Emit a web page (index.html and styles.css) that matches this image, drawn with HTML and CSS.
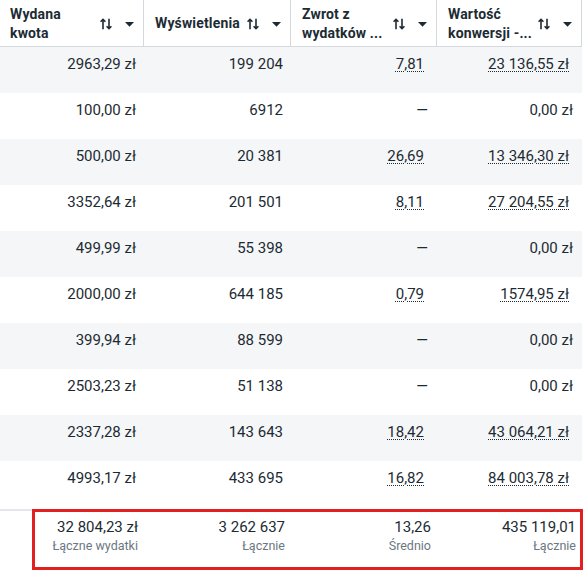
FILE: index.html
```html
<!DOCTYPE html>
<html lang="pl">
<head>
<meta charset="utf-8">
<link rel="stylesheet" href="styles.css">
</head>
<body>
<div class="table">
  <div class="head">
    <div class="hcell"><span class="label">Wydana kwota</span><span class="icons"><svg class="sort" width="12" height="12" viewBox="0 0 12 12"><path d="M3 11.2V1.2M0.6 3.8L3 1.3L5.4 3.8M9 0.8v10M6.6 8.2L9 10.7L11.4 8.2" fill="none" stroke="#1c2b33" stroke-width="1.6"/></svg><svg class="caret" width="9" height="5" viewBox="0 0 9 5"><path d="M0 0H9L4.5 4.8Z" fill="#1c2b33"/></svg></span></div>
    <div class="hcell"><span class="label">Wyświetlenia</span><span class="icons"><svg class="sort" width="12" height="12" viewBox="0 0 12 12"><path d="M3 11.2V1.2M0.6 3.8L3 1.3L5.4 3.8M9 0.8v10M6.6 8.2L9 10.7L11.4 8.2" fill="none" stroke="#1c2b33" stroke-width="1.6"/></svg><svg class="caret" width="9" height="5" viewBox="0 0 9 5"><path d="M0 0H9L4.5 4.8Z" fill="#1c2b33"/></svg></span></div>
    <div class="hcell"><span class="label">Zwrot z <span class="nw">wydatków ...</span></span><span class="icons"><svg class="sort" width="12" height="12" viewBox="0 0 12 12"><path d="M3 11.2V1.2M0.6 3.8L3 1.3L5.4 3.8M9 0.8v10M6.6 8.2L9 10.7L11.4 8.2" fill="none" stroke="#1c2b33" stroke-width="1.6"/></svg><svg class="caret" width="9" height="5" viewBox="0 0 9 5"><path d="M0 0H9L4.5 4.8Z" fill="#1c2b33"/></svg></span></div>
    <div class="hcell last"><span class="label">Wartość <span class="nw">konwersji -...</span></span><span class="icons"><svg class="sort" width="12" height="12" viewBox="0 0 12 12"><path d="M3 11.2V1.2M0.6 3.8L3 1.3L5.4 3.8M9 0.8v10M6.6 8.2L9 10.7L11.4 8.2" fill="none" stroke="#1c2b33" stroke-width="1.6"/></svg><svg class="caret" width="9" height="5" viewBox="0 0 9 5"><path d="M0 0H9L4.5 4.8Z" fill="#1c2b33"/></svg></span></div>
  </div>

  <div class="row odd"><div class="cell">2963,29 zł</div><div class="cell">199 204</div><div class="cell"><span class="u">7,81</span></div><div class="cell"><span class="u">23 136,55 zł</span></div></div>
  <div class="row"><div class="cell">100,00 zł</div><div class="cell">6912</div><div class="cell">—</div><div class="cell">0,00 zł</div></div>
  <div class="row odd"><div class="cell">500,00 zł</div><div class="cell">20 381</div><div class="cell"><span class="u">26,69</span></div><div class="cell"><span class="u">13 346,30 zł</span></div></div>
  <div class="row"><div class="cell">3352,64 zł</div><div class="cell">201 501</div><div class="cell"><span class="u">8,11</span></div><div class="cell"><span class="u">27 204,55 zł</span></div></div>
  <div class="row odd"><div class="cell">499,99 zł</div><div class="cell">55 398</div><div class="cell">—</div><div class="cell">0,00 zł</div></div>
  <div class="row"><div class="cell">2000,00 zł</div><div class="cell">644 185</div><div class="cell"><span class="u">0,79</span></div><div class="cell"><span class="u">1574,95 zł</span></div></div>
  <div class="row odd"><div class="cell">399,94 zł</div><div class="cell">88 599</div><div class="cell">—</div><div class="cell">0,00 zł</div></div>
  <div class="row"><div class="cell">2503,23 zł</div><div class="cell">51 138</div><div class="cell">—</div><div class="cell">0,00 zł</div></div>
  <div class="row odd"><div class="cell">2337,28 zł</div><div class="cell">143 643</div><div class="cell"><span class="u">18,42</span></div><div class="cell"><span class="u">43 064,21 zł</span></div></div>
  <div class="row"><div class="cell">4993,17 zł</div><div class="cell">433 695</div><div class="cell"><span class="u">16,82</span></div><div class="cell"><span class="u">84 003,78 zł</span></div></div>

  <div class="foot">
    <div class="fcell"><div class="val">32 804,23 zł</div><div class="sub">Łączne wydatki</div></div>
    <div class="fcell"><div class="val">3 262 637</div><div class="sub">Łącznie</div></div>
    <div class="fcell"><div class="val">13,26</div><div class="sub">Średnio</div></div>
    <div class="fcell"><div class="val">435 119,01</div><div class="sub">Łącznie</div></div>
    <div class="highlight"></div>
  </div>
</div>
</body>
</html>
```

FILE: styles.css
```css
html, body {
  margin: 0;
  padding: 0;
  background: #ffffff;
}
body {
  font-family: Roboto, "Liberation Sans", sans-serif;
  color: #1c2b33;
}
.table {
  width: 582px;
}
.head, .row, .foot {
  display: grid;
  grid-template-columns: 144px 147px 146px 145px;
}
.head {
  height: 46px;
  border-bottom: 1px solid #d4d9de;
}
.hcell {
  display: flex;
  align-items: center;
  padding: 2px 9px 0 10px;
  border-right: 1px solid #d4d9de;
  font-size: 14px;
  font-weight: 700;
  line-height: 19.5px;
  letter-spacing: 0.15px;
}
.hcell:nth-child(2), .hcell:nth-child(3), .hcell:nth-child(4) {
  padding-left: 11px;
}
.label {
  flex: 1;
  min-width: 0;
}
.nw {
  white-space: nowrap;
}
.icons {
  display: flex;
  align-items: center;
  gap: 13px;
  flex: none;
  margin-left: 6px;
}
.sort {
  display: block;
}
.caret {
  display: block;
}
.row {
  height: 46px;
  font-size: 15px;
  line-height: 20px;
}
.row.odd {
  background: #f5f6f7;
}
.cell {
  text-align: right;
  padding: 7px 8px 0 0;
}
.cell:nth-child(3), .cell:nth-child(4) {
  padding-right: 9px;
}
.u {
  text-decoration: underline dotted;
  text-decoration-thickness: 1px;
  text-underline-offset: 2px;
  margin-right: 4px;
}
.foot {
  position: relative;
  border-top: 2px solid #e4e6eb;
  margin-top: 2px;
  height: 62px;
}
.fcell {
  text-align: right;
  padding: 6px 6px 0 0;
}
.val {
  font-size: 15px;
  line-height: 20px;
}
.sub {
  font-size: 12.5px;
  line-height: 18px;
  color: #6b7781;
}
.highlight {
  position: absolute;
  left: 32px;
  top: -2px;
  width: 545px;
  height: 55px;
  border: 3px solid #e2201f;
}
```
